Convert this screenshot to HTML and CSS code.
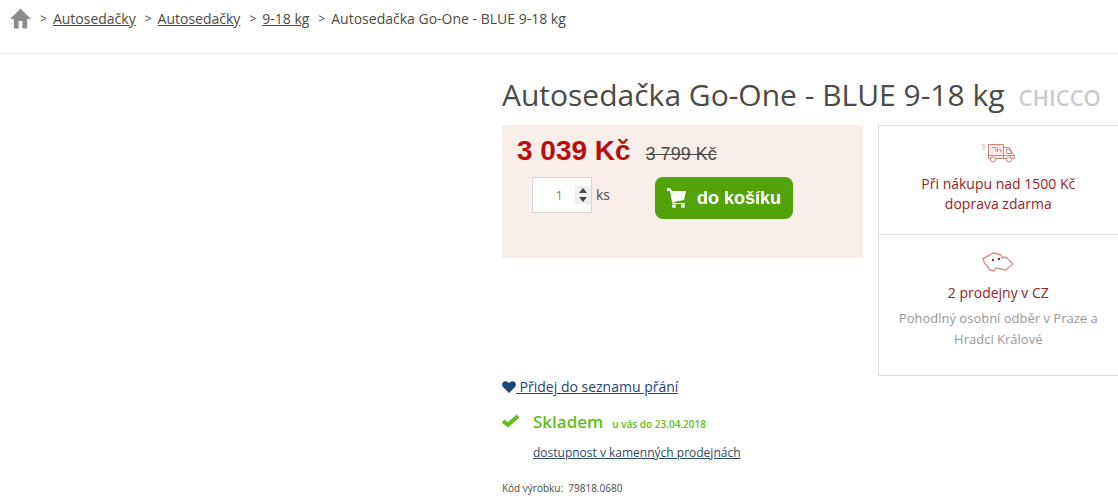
FILE: index.html
```
<!DOCTYPE html>
<html lang="cs">
<head>
    <meta charset="UTF-8">
    <meta name="viewport" content="width=device-width, initial-scale=1.0">
    <title>Autosedačka Go-One - BLUE 9-18 kg</title>
    <link rel="stylesheet" href="styles.css">
</head>
<body>
    <nav class="breadcrumb" aria-label="Drobečková navigace">
        <a href="#" class="home" aria-label="Úvod">
            <svg width="21" height="21" viewBox="0 0 22 21"><path fill="#8c8c8c" d="M11 0 22 11h-4v10h-5v-8H9v8H4V11H0z"/></svg>
        </a>
        <span class="crumb"><span class="sep">&gt;</span><a href="#">Autosedačky</a></span>
        <span class="crumb"><span class="sep">&gt;</span><a href="#">Autosedačky</a></span>
        <span class="crumb"><span class="sep">&gt;</span><a href="#">9-18 kg</a></span>
        <span class="crumb"><span class="sep">&gt;</span>Autosedačka Go-One - BLUE 9-18 kg</span>
    </nav>

    <main class="product">
        <div class="product-info">
            <h1>Autosedačka Go-One - BLUE 9-18 kg <span class="brand">CHICCO</span></h1>

            <div class="product-columns">
                <div class="product-main">
                    <form class="buy-box">
                        <div class="prices">
                            <strong class="price">3 039 Kč</strong>
                            <del class="old-price">3 799 Kč</del>
                        </div>
                        <div class="buy-row">
                            <div class="quantity">
                                <input type="number" id="quantity" value="1" min="1">
                                <div class="stepper">
                                    <button type="button" id="more" aria-label="Přidat kus"><svg width="8" height="5" viewBox="0 0 8 5"><path fill="#444" d="M0 5 4 0l4 5z"/></svg></button>
                                    <button type="button" id="less" aria-label="Ubrat kus"><svg width="8" height="5" viewBox="0 0 8 5"><path fill="#444" d="M0 0h8L4 5z"/></svg></button>
                                </div>
                            </div>
                            <label for="quantity">ks</label>
                            <button type="submit" class="cart-btn">
                                <svg width="20" height="20" viewBox="0 0 20 20">
                                    <path fill="#fff" d="M0 0h3l2 3h14l-2 9-10 2 1 1h10v1H6l-1-2L3 3H0z"/>
                                    <circle fill="#fff" cx="7" cy="18" r="2"/>
                                    <circle fill="#fff" cx="16" cy="18" r="2"/>
                                </svg>
                                do košíku
                            </button>
                        </div>
                    </form>

                    <a href="#" class="wishlist"><svg width="14" height="12" viewBox="0 0 14 12"><path fill="#1c4679" d="M7 12 1 6C-2 2 3-2 7 2c4-4 9 0 6 4z"/></svg><span>&nbsp;Přidej do seznamu přání</span></a>

                    <div class="stock">
                        <svg width="18" height="14" viewBox="0 0 18 14"><path fill="none" stroke="#5fbf13" stroke-width="4" d="m1 7 5 4L16 2"/></svg>
                        <strong>Skladem</strong>
                        <span class="delivery">u vás do 23.04.2018</span>
                    </div>
                    <a href="#" class="stores-link">dostupnost v kamenných prodejnách</a>
                    <p class="code">Kód výrobku: &nbsp;79818.0680</p>
                </div>

                <aside class="benefits">
                    <div class="benefit">
                        <svg width="36" height="20" viewBox="0 0 34 20" fill="none" stroke="#d9807b">
                            <path stroke="#e7b5b0" d="M0 2h4M2 4h3M1 6h3"/>
                            <path fill="#fbeae8" d="M7.500 1.500h15v14h-15z"/>
                            <path d="M7 12.500h26M14 15.500h12M22.500 4.500h6l3 6 2 2v3h-3M25.500 6.500h3l2 4h-5zM11 4.500h4v4M16.500 5v4M18 6.500h2v3"/>
                            <circle fill="#fff" cx="12" cy="16.500" r="2.500"/>
                            <circle fill="#fff" cx="28" cy="16.500" r="2.500"/>
                        </svg>
                        <h2>Při nákupu nad 1500 Kč doprava zdarma</h2>
                    </div>
                    <div class="benefit">
                        <svg width="32" height="20" viewBox="0 0 32 20">
                            <path fill="none" stroke="#d99590" stroke-width="1.400" stroke-linejoin="round" d="M1 6.500 8 3l3-2 5 1 3 1 1 3 2-1 3 1 1 1 5 5-4 3-3 3-5-1-5-1-2 3-4-1-4-5-2-3z"/>
                            <circle fill="#842b27" cx="11" cy="8" r="1.200"/>
                            <circle fill="#842b27" cx="17" cy="7" r="1.200"/>
                        </svg>
                        <h2>2 prodejny v CZ</h2>
                        <p>Pohodlný osobní odběr v Praze a Hradci Králové</p>
                    </div>
                </aside>
            </div>
        </div>
    </main>

    <script>
    const quantity = document.getElementById('quantity');
    document.getElementById('more').addEventListener('click', () => quantity.stepUp());
    document.getElementById('less').addEventListener('click', () => quantity.stepDown());
    </script>
</body>
</html>
```
FILE: styles.css
```
* {
    box-sizing: border-box;
}
body {
    margin: 0;
    background: #fff;
    color: #4a4a46;
    font-family: "Open Sans", sans-serif;
    font-size: 14px;
    line-height: 20px;
}
svg {
    display: block;
}

.breadcrumb {
    display: flex;
    align-items: center;
    gap: 9px;
    padding: 8px 10px 24px;
    border-bottom: 1px solid #eee;
}
.breadcrumb a {
    color: inherit;
}
.crumb {
    display: flex;
    gap: 6px;
}
.sep {
    font-size: 12px;
}

.product-info {
    margin-left: 44.9%;
    padding-top: 21px;
}
h1 {
    display: flex;
    align-items: baseline;
    gap: 14px;
    margin: 0 0 8px;
    font-size: 30px;
    font-weight: 400;
    line-height: 40px;
    white-space: nowrap;
}
.brand {
    color: #ccc;
    font-size: 22px;
    font-weight: 600;
}
.product-columns {
    display: grid;
    grid-template-columns: 3fr 2fr;
    gap: 15px;
    align-items: start;
}

.buy-box {
    height: 133px;
    padding: 10px 15px;
    background: #f8eeea;
    font-size: 14px;
}
.prices {
    display: flex;
    align-items: baseline;
    gap: 15px;
    font-family: "Liberation Sans", sans-serif;
    line-height: 32px;
}
.price {
    color: #b90e0a;
    font-size: 28px;
}
.old-price {
    font-size: 18px;
}
.buy-row {
    display: flex;
    align-items: flex-start;
    gap: 4px;
    margin-top: 7px;
    padding-left: 15px;
}
.buy-row label {
    padding-top: 8px;
}
.quantity {
    display: flex;
    align-items: center;
    width: 60px;
    height: 36px;
    border: 1px solid #d5d5d5;
    background: #fff;
}
.quantity input {
    width: 42px;
    padding: 0 12px 0 0;
    border: 0;
    background: none;
    color: #888;
    font-family: inherit;
    font-size: 13px;
    text-align: right;
    appearance: textfield;
}
.quantity input::-webkit-inner-spin-button {
    display: none;
}
.stepper {
    display: flex;
    flex-direction: column;
    width: 16px;
    background: #eee;
}
.stepper button {
    display: flex;
    justify-content: center;
    padding: 2px;
    border: 0;
    background: none;
}
.cart-btn {
    display: flex;
    align-items: center;
    gap: 10px;
    height: 42px;
    margin-left: 41px;
    padding: 0 12px;
    border: 0;
    border-radius: 8px;
    background: #51a309;
    color: #fff;
    font: bold 18px "Liberation Sans", sans-serif;
    cursor: pointer;
}

.wishlist {
    display: flex;
    align-items: center;
    margin-top: 119px;
    color: #1c4679;
}
.stock {
    display: flex;
    align-items: baseline;
    margin-top: 15px;
    color: #5fbf13;
}
.stock strong {
    margin: 0 9px 0 13px;
    font-size: 17px;
    font-weight: 600;
}
.delivery {
    font-size: 10px;
    font-weight: 600;
}
.stores-link {
    display: block;
    margin: 9px 0 0 31px;
    color: #2d4a6b;
    font-size: 12px;
}
.code {
    margin: 15px 0 0;
    font-size: 10px;
}

.benefits {
    border: 1px solid #ddd;
    border-right: 0;
}
.benefit {
    display: flex;
    flex-direction: column;
    align-items: center;
    padding: 17px 20px 20px;
    text-align: center;
}
.benefit + .benefit {
    padding-bottom: 25px;
    border-top: 1px solid #ddd;
}
.benefit h2 {
    margin: 11px 0 0;
    color: #9c211c;
    font-size: 14px;
    font-weight: 400;
}
.benefit p {
    margin: 5px 0 0;
    color: #999;
    font-size: 13px;
    line-height: 21px;
}
```
